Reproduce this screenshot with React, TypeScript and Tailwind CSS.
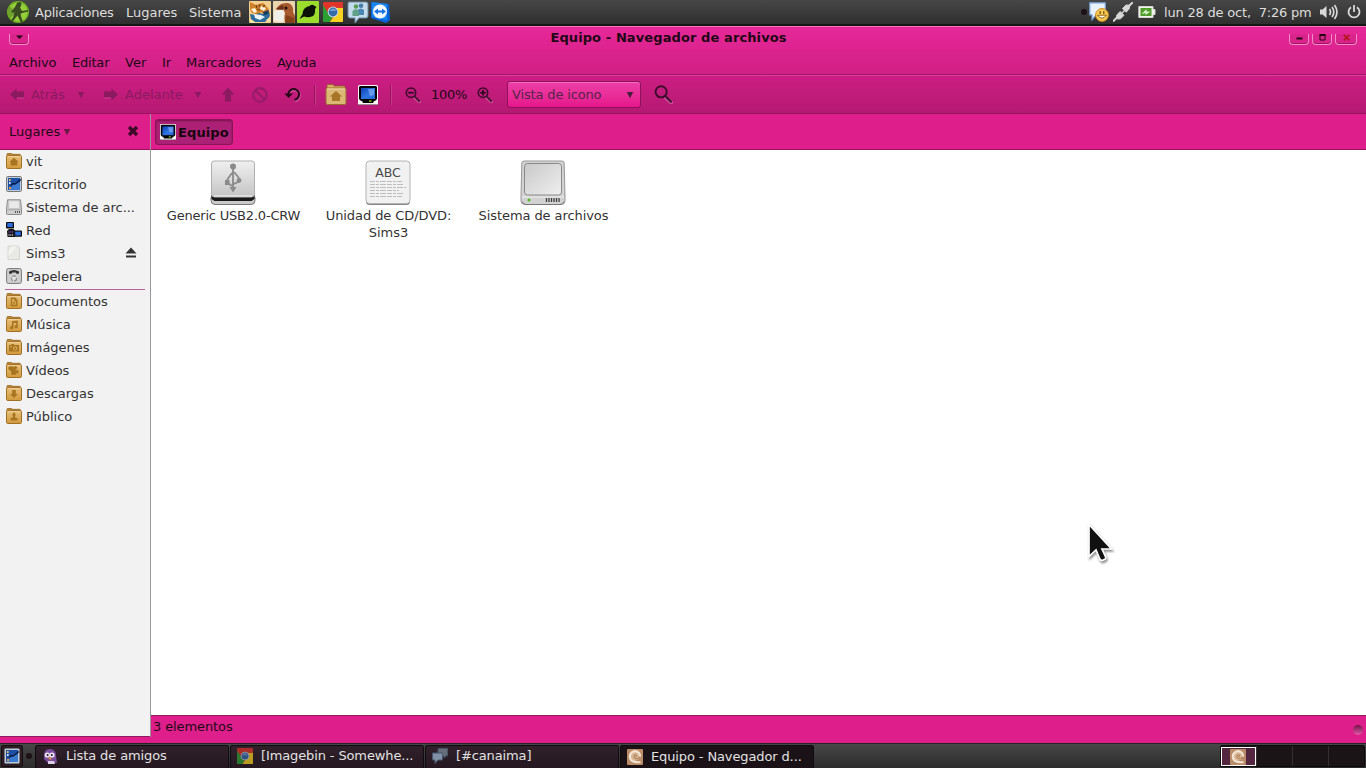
import React from "react";

type IconProps = { size?: number; className?: string };

/* ---------- shared drawings ---------- */

function Monitor({ size = 16, className = "" }: IconProps) {
  return (
    <svg width={size} height={size} viewBox="0 0 20 20" className={`shrink-0 ${className}`}>
      <defs>
        <linearGradient id="screen" x1="0" y1="0" x2="1" y2="1">
          <stop offset="0" stopColor="#0d3fb4" />
          <stop offset="0.55" stopColor="#2f74e4" />
          <stop offset="1" stopColor="#2767d8" />
        </linearGradient>
      </defs>
      <rect x="0" y="0" width="20" height="20" rx="1.5" fill="#f6f6f4" />
      <path d="M2 1h16l1 1v12l-2 2h-1l-1 2H5l-1-2H3l-2-2V2z" fill="#050505" />
      <rect x="3" y="3" width="14" height="11" fill="url(#screen)" />
      <path d="M10 4h6v6l-4 1z" fill="#8fb8f5" opacity="0.6" />
      <rect x="11" y="15.4" width="2.5" height="1.4" fill="#7bd410" />
      <path d="M0 19.5h20" stroke="#9a8f95" />
    </svg>
  );
}

function Desktop({ size = 16, className = "" }: IconProps) {
  return (
    <svg width={size} height={size} viewBox="0 0 16 16" className={`shrink-0 ${className}`}>
      <rect x="0.5" y="0.5" width="15" height="15" rx="1.5" fill="#e8e8e8" stroke="#77797b" />
      <rect x="1.8" y="1.8" width="12.4" height="12.4" fill="#1c4fa5" />
      <path d="M2 14l5-5 7-3v8z" fill="#3a79cf" />
      <path d="M5 9.500l2-2 2 .5L15 3.500" stroke="#0b1b3c" strokeWidth="1.3" fill="none" />
      <rect x="3" y="3" width="1.6" height="2" fill="#f2c35c" />
      <rect x="3" y="6" width="1.6" height="2" fill="#d5e2f6" />
      <rect x="3" y="11" width="2" height="2" fill="#f09a2a" />
    </svg>
  );
}

function Folder({ children }: { children: React.ReactNode }) {
  return (
    <svg width="16" height="16" viewBox="0 0 16 16" className="shrink-0">
      <defs>
        <linearGradient id="folder" x1="0" y1="0" x2="0" y2="1">
          <stop offset="0" stopColor="#e6bf7a" />
          <stop offset="1" stopColor="#d29a3c" />
        </linearGradient>
      </defs>
      <path d="M1 4V1.2Q1 .5 1.8.5h3.4q.8 0 .8.8h7.5q1 0 1 1V4z" fill="#c08a34" stroke="#94631c" strokeWidth="0.8" />
      <rect x="0.5" y="2.6" width="15" height="12.9" rx="1.2" fill="url(#folder)" stroke="#a36f25" />
      <path d="M1.5 3.6h13" stroke="#f2d9a6" strokeWidth="0.8" />
      <g fill="#a8741f" stroke="none">{children}</g>
    </svg>
  );
}

const glyphs = {
  home: <path d="M8 4.8l4.6 4.2h-1.3v3.6H4.7V9H3.4z" />,
  doc: <path fillRule="evenodd" d="M4.8 4.5h4.4l2.3 2.4v6.3H4.8zM6.2 6v5.8h3.9V8.2H8.2V6z M7.2 9h2v1.6h-2z" />,
  music: <path d="M6 5.2l5.8-.6v6.2a1.6 1.6 0 1 1-1.5-1.7V6.8l-2.8.3v4.5A1.7 1.7 0 1 1 6 10z" />,
  camera: <path fillRule="evenodd" d="M3 6h2l.7-.9h2l.7.9H13v6.6H3zM9.2 7.2a2.2 2.2 0 1 0 .01 0zM9.2 8.3a1.1 1.1 0 1 1-.01 0zM4 7.2v1h2v-1z" />,
  video: <path d="M5 4.6a1.8 1.8 0 0 1 2.6 1 1.8 1.8 0 1 1 2 1.9v1.2l2.8-1.3v4.4L10.2 11v1.8H5.4L5 9 3.4 8.2A1.9 1.9 0 0 1 5 4.6z" />,
  down: <path d="M6.2 5h3.6v4h2.1L8 13 4.1 9h2.1z" />,
  share: <path d="M7.1 4.5h1.8v1.2l1 .9-.9 1.6v1.1l2.8 1.3-.6 2H4.8l-.6-2L7 9.3V8.2L6.1 6.6l1-.9z" />,
};

function Drive({ size = 16 }: IconProps) {
  return (
    <svg width={size} height={size} viewBox="0 0 16 16" className="shrink-0">
      <path d="M1.5.8h13l1 9.6v4.400q0 .7-.8.7H1.300q-.8 0-.8-.7v-4.400z" fill="#cfcfcf" stroke="#8b8b8b" />
      <rect x="2.6" y="1.8" width="10.8" height="7.8" rx="0.6" fill="#e9e9e9" stroke="#b4b4b4" strokeWidth="0.6" />
      <path d="M.8 10.8h14.4" stroke="#a5a5a5" />
      <path d="M9.5 12v2M11.5 12v2M13.5 12v2" stroke="#555" />
    </svg>
  );
}

function Network() {
  return (
    <svg width="16" height="16" viewBox="0 0 16 16" className="shrink-0">
      <rect x="0" y="0" width="8" height="6.4" rx="1" fill="#080808" />
      <rect x="1.2" y="1" width="5.6" height="4" fill="#2a6ee0" />
      <rect x="8" y="8.6" width="8" height="6.2" rx="1" fill="#080808" />
      <rect x="9.2" y="9.6" width="5.6" height="3.9" fill="#2a6ee0" />
      <path d="M1 9l2-2h4.500l1.500 1.500V15H1.500z" fill="#17151c" />
      <path d="M2.6 10h4.5" stroke="#9b63e8" strokeDasharray="1 .7" />
      <path d="M2.5 13h5" stroke="#c9c9c9" strokeDasharray="1 .8" strokeWidth="1.6" />
    </svg>
  );
}

function Paper() {
  return (
    <svg width="16" height="16" viewBox="0 0 16 16" className="shrink-0">
      <path d="M2 1h10l1.500 1.500v12H2z" fill="#e9e9e6" stroke="#cfcfca" strokeWidth="0.8" />
      <path d="M2.500 6l4-4.500h4L2.500 11z" fill="#f3f3f1" />
    </svg>
  );
}

function Trash() {
  return (
    <svg width="16" height="16" viewBox="0 0 16 16" className="shrink-0">
      <rect x="0.6" y="0.6" width="14.8" height="14.8" rx="1.8" fill="#cfcfcf" stroke="#777" />
      <path d="M3 3.600q5-3 10 0v2L11 6 9.500 4.600h-3L5 6 3 5.600z" fill="#333" />
      <circle cx="8" cy="10.4" r="2.5" fill="#e3e3e3" stroke="#8c8c8c" strokeWidth="1.2" strokeDasharray="3.6 1.3" />
    </svg>
  );
}

function Chrome({ size = 20, dim = false }: { size?: number; dim?: boolean }) {
  return (
    <svg width={size} height={size} viewBox="0 0 20 20" className={dim ? "shrink-0 opacity-70" : "shrink-0"}>
      <rect width="20" height="20" rx="1.5" fill="#e23327" />
      <path d="M0 3l6 9 4 2-3 6H1q-1 0-1-1z" fill="#2c9f33" />
      <path d="M20 6v13q0 1-1 1H7l4-6 3-4-2-4z" fill="#f6d321" />
      <path d="M0 0h20v6H10z" fill="#e0352b" />
      <circle cx="10" cy="10" r="5.4" fill="#cfd9e2" />
      <circle cx="10" cy="10" r="4.4" fill="#3569a8" />
      <path d="M6.800 9a3.300 3.300 0 0 1 6.400 0" fill="#6fa0d4" />
    </svg>
  );
}

function Arrow({ flip = false }: { flip?: boolean }) {
  return (
    <svg width="16" height="16" viewBox="0 0 16 16" className={flip ? "shrink-0 -scale-x-100" : "shrink-0"}>
      <path d="M1 7.500L7.500 1.500V4.500H15v6H7.500V13.500z" fill="#8b1a60" />
      <path d="M8 11h7" stroke="#d64a9c" strokeWidth="0.7" />
    </svg>
  );
}

function Caret({ className = "" }: { className?: string }) {
  return (
    <svg width="8" height="8" viewBox="0 0 8 8" className={`shrink-0 ${className}`} fill="currentColor">
      <path d="M.8 1h6.400L4 7.200z" />
    </svg>
  );
}

function Magnifier({ size, sign }: { size: number; sign?: "+" | "-" }) {
  return (
    <svg width={size} height={size} viewBox="0 0 16 16" className="shrink-0" fill="none">
      <path d="M10 10.800l4.500 4" stroke="#e88abf" strokeWidth="3" strokeLinecap="round" opacity="0.5" />
      <path d="M9.800 9.600l4.400 4.400" stroke="#4a1237" strokeWidth="2" strokeLinecap="round" />
      <circle cx="6" cy="5.700" r="4.700" stroke="#3b0b2b" strokeWidth="1.600" />
      {sign && <path d="M3.200 5.700h5.600" stroke="#2a0a20" strokeWidth="1.700" />}
      {sign === "+" && <path d="M6 2.900v5.600" stroke="#2a0a20" strokeWidth="1.700" />}
    </svg>
  );
}

function Shell({ size = 16 }: IconProps) {
  return (
    <svg width={size} height={size} viewBox="0 0 16 16" className="shrink-0" fill="none">
      <rect width="16" height="16" rx="1" fill="#b98b66" />
      <circle cx="8" cy="6.800" r="5" fill="#d9b795" />
      <path d="M13.500 13C7 14 3 12 2.800 7.500 3 4 6 2 8.500 2.200c3 .3 5 2.600 4.500 5.600" stroke="#f2e4d2" strokeWidth="2.200" />
      <path d="M12.800 7.500c-.8 2.600-4.600 3-5.600 1S8 5 9.400 6c.8.8 0 2-1 1.800" stroke="#a4744e" strokeWidth="1" />
    </svg>
  );
}

/* ---------- top panel ---------- */

function TopPanel() {
  return (
    <header className="flex h-[26px] items-center border-b-2 border-[#161616] bg-gradient-to-b from-[#474747] to-[#2f2f2f] text-[#dedede]">
      <svg width="24" height="24" viewBox="0 0 24 24" className="ml-[6px] shrink-0">
        <circle cx="12" cy="12" r="11" fill="#6fae22" />
        <circle cx="12" cy="12" r="9.500" fill="#94cf3b" />
        <path d="M3 6l5 4 1 4-5 4q-3-6-1-12z" fill="#5b8528" opacity=".6" />
        <path d="M11 3q3-2 4.500.500L15 6l-1 1.500 2 3.500 6-1v1.500l-6 1.500-1.500 1 1 4 1.500 4-2 .5-3.500-7-2.500 3-3 4-1.500-.5 3-5.500 1-5L7 13l-2-1 4-5z" fill="#394b20" />
      </svg>
      <span className="ml-[5px] w-[91px] tracking-[-0.22px]">Aplicaciones</span>
      <span className="w-[63px]">Lugares</span>
      <span className="w-[60px]">Sistema</span>
      <div className="flex items-center">
        <svg width="22" height="22" viewBox="0 0 22 22" className="mr-[2px]">
          <rect width="22" height="22" rx="1" fill="#f2cf8c" />
          <path d="M1 1l6 3 7-2 5 5 2 6-5 1-4-3-3 3-6-2-2-4z" fill="#cf812a" />
          <path d="M2 8l4-1 2 4-3 1zM12 5l5 2-2 3-4-2z" fill="#fff4d9" />
          <path d="M7 4l1 3M11 3l-1 3M16 4l-2 2M8 8l3 1" stroke="#7a4313" strokeWidth="1.200" />
          <path d="M1 13l5 1 4-2 4 1 6-2 1 4-5 6H6l-4-3z" fill="#2b6b9d" />
          <path d="M5 13l7 1 4 2-5 3-5-2z" fill="#eef3f5" />
          <path d="M14 11l6-2-1 4-4 1z" fill="#183d5c" />
          <path d="M1 18l6 4H1zM17 19l4-2v4z" fill="#fbe6a6" />
        </svg>
        <svg width="22" height="22" viewBox="0 0 22 22" className="mr-[2px]">
          <rect width="22" height="22" rx="1" fill="#ead3ad" />
          <path d="M3 8Q7 1 15 2q6 2 5 9l2 4v7H12L11 12z" fill="#a75a2e" />
          <path d="M1 10l9-2 2 4-2 9-9-1z" fill="#f1eeea" />
          <path d="M3 8l6-4 2 2-1 3z" fill="#6d3318" />
          <circle cx="13" cy="7" r="1.500" fill="#1b0d07" />
          <path d="M13 14l8 3v5h-9z" fill="#824019" />
        </svg>
        <svg width="22" height="22" viewBox="0 0 22 22" className="mr-[4px]">
          <rect width="22" height="22" rx="1" fill="#9bdc2d" />
          <path d="M2.500 18L5.500 13Q6 6 12.500 5q2.500-2 4.500-.5L19.500 6 18 8q1 7-5 8-3 .5-6-.5z" fill="#0c1205" />
        </svg>
        <Chrome size={20} />
        <svg width="22" height="22" viewBox="0 0 22 22" className="ml-[4px]">
          <path d="M2 1h17q2 0 2 2v12q0 2-2 2h-7l-4 5v-5H3q-2 0-2-2V3q0-2 1-2z" fill="#c5dcec" stroke="#6b8ca5" />
          <circle cx="9" cy="5.500" r="2.300" fill="#5b9e56" />
          <circle cx="14" cy="4.800" r="2.300" fill="#467da8" />
          <path d="M10.500 14V9q3-3 6.500 0v5z" fill="#4a86b4" />
          <path d="M5.500 15V10q3-3.500 6.500 0v5z" fill="#62a08a" />
        </svg>
        <svg width="20" height="22" viewBox="0 0 20 22" className="ml-[2px]">
          <path d="M0 1l18 2 1 16-4 3-15-5z" fill="#0763d8" />
          <path d="M1 1l15 2v16l-15-3z" fill="#1b87ee" />
          <circle cx="9" cy="10.500" r="7" fill="#f3f9ff" />
          <path d="M3 10.500l4-3v2h4v-2l4 3-4 3v-2H7v2z" fill="#1473df" />
        </svg>
      </div>
      <div className="flex-1" />
      <span className="mr-[2px] h-[6px] w-[6px] rounded-full bg-[#1d1119]" />
      <svg width="20" height="20" viewBox="0 0 20 20" className="mr-[4px]">
        <path d="M.8.800h15.500v12H7l-4 5v-5H.8z" fill="#e9f1fb" stroke="#77a0d5" strokeWidth="1.200" />
        <circle cx="13" cy="13" r="6.400" fill="#f8cc55" stroke="#d08a18" />
        <path d="M8.500 13.200q4.500 6 9 0z" fill="#fff8e0" stroke="#8a5208" strokeWidth=".9" />
        <path d="M11.200 9.200v2.600M14.800 9.200v2.600" stroke="#694006" strokeWidth="1.300" />
      </svg>
      <svg width="20" height="20" viewBox="0 0 20 20" className="mr-[5px]" stroke="#d6d6d6" fill="#d6d6d6">
        <path d="M0 19.500l5-5M15 5l5-5" strokeWidth="2" />
        <path d="M3.500 13.500l3.500-4 4 3.800-3.500 3.500-3 .2zM9.500 6.500l3.500-3.500 3 .2.500 3-3.200 4z" />
        <path d="M8 12l4-4" strokeWidth="1.500" />
      </svg>
      <svg width="18" height="14" viewBox="0 0 18 14" className="mr-[8px]">
        <path d="M.8 1.500h14.200v3h2v5h-2v3H.8z" fill="#f1f1ec" stroke="#d6d6d2" />
        <rect x="2.500" y="3" width="11" height="8" fill="#4f9c2b" />
        <path d="M3.500 9l5-5v2.500h4L7.500 10V8z" fill="#d8f2c9" />
      </svg>
      <span className="w-[156px] whitespace-pre tracking-[-0.2px]">lun 28 de oct,&nbsp; 7:26 pm</span>
      <svg width="19" height="18" viewBox="0 0 19 18" className="mr-[8px]" fill="none" stroke="#d8d8d8">
        <path d="M0 6.500h2.500l4-3.500v12l-4-3.500H0z" fill="#d8d8d8" stroke="none" />
        <path d="M9.500 6q2 3 0 6M12 4q3.600 5 0 10M14.500 2q5 7 0 14" strokeWidth="1.700" />
      </svg>
      <svg width="14" height="14" viewBox="0 0 14 14" className="mr-[5px]" fill="none" stroke="#d8d8d8" strokeWidth="1.800">
        <path d="M4 2.300a5.500 5.500 0 1 0 6 0M7 0v7" />
      </svg>
    </header>
  );
}

/* ---------- window chrome ---------- */

function WindowButton({ children, className }: { children: React.ReactNode; className: string }) {
  return (
    <span
      className={`flex h-[11px] items-center justify-center rounded-b-[4px] border border-t-0 border-[#f08cc6] bg-[#d9248c] shadow-[inset_0_-1px_0_#a81168] ${className}`}
    >
      <svg width="9" height="9" viewBox="0 0 9 9" className="-mt-[4px]">
        {children}
      </svg>
    </span>
  );
}

function TitleBar() {
  return (
    <div className="flex h-[24px] border-t border-[#f574bd] pt-[7px]">
      <WindowButton className="ml-[9px] w-[20px]">
        <path d="M1 2.500h7L4.500 6z" fill="#250616" />
      </WindowButton>
      <h1 className="-mt-[5px] flex-1 pl-[19px] text-center text-[13px] leading-[18px] font-bold tracking-[0.1px] text-[#1e0815]">
        Equipo - Navegador de archivos
      </h1>
      <WindowButton className="mr-[3px] w-[20px]">
        <path d="M1.500 5.500h6" stroke="#200511" strokeWidth="2" />
      </WindowButton>
      <WindowButton className="mr-[3px] w-[20px]">
        <path d="M2 2h5v5H2z" stroke="#200511" fill="none" />
        <path d="M1.500 2h6" stroke="#200511" strokeWidth="2" />
      </WindowButton>
      <WindowButton className="mr-[9px] w-[22px]">
        <path d="M1.800 1.800l5.500 5.500M7.300 1.800L1.800 7.300" stroke="#b5161d" strokeWidth="1.800" />
      </WindowButton>
    </div>
  );
}

function MenuBar() {
  return (
    <nav className="flex h-[25px] items-center border-b border-[#a1186a] pl-[9px] text-[#1b0914]">
      <span className="w-[63px] tracking-[-0.2px]">Archivo</span>
      <span className="w-[53px] tracking-[-0.2px]">Editar</span>
      <span className="w-[37px]">Ver</span>
      <span className="w-[24px]">Ir</span>
      <span className="w-[91px]">Marcadores</span>
      <span className="tracking-[-0.2px]">Ayuda</span>
    </nav>
  );
}

function Separator({ className }: { className: string }) {
  return <span className={`h-[20px] w-[2px] border-l border-[#98155e] bg-[#d9529f]/50 ${className}`} />;
}

function ToolBar() {
  return (
    <div className="flex h-[39px] items-center border-t border-b border-t-[#e03d9c] border-b-[#9a115f] bg-gradient-to-b from-[#cd1e83] to-[#b51972] text-[#8b1a60]">
      <span className="ml-[9px] flex"><Arrow /></span>
      <span className="ml-[6px] w-[46px]">Atrás</span>
      <Caret />
      <span className="ml-[18px] flex"><Arrow flip /></span>
      <span className="ml-[6px] w-[69px]">Adelante</span>
      <Caret />
      <svg width="16" height="16" viewBox="0 0 16 16" className="ml-[18px]">
        <path d="M8 .8l6.500 6.700H11V14.500H5V7.500H1.500z" fill="#8b1a60" />
      </svg>
      <svg width="16" height="16" viewBox="0 0 16 16" className="ml-[16px]" fill="none" stroke="#9b1c6b" strokeWidth="2.400">
        <circle cx="8" cy="8" r="6.700" />
        <path d="M3.500 3.500l9 9" />
      </svg>
      <svg width="18" height="18" viewBox="0 0 18 18" className="ml-[16px]" fill="none">
        <path d="M4.500 10.500A5.600 5.600 0 1 1 11 15" stroke="#df6dae" strokeWidth="3" opacity=".5" />
        <path d="M4.300 9A5.400 5.400 0 1 1 10.500 13.800" stroke="#260718" strokeWidth="2" />
        <path d="M.3 7.500l4.200 4.500L9 7.500z" fill="#260718" />
      </svg>
      <Separator className="ml-[12px]" />
      <svg width="22" height="21" viewBox="0 0 22 21" className="ml-[9px]">
        <path d="M2 5V1.500Q2 .5 3 .5h5q1 0 1 1.500h10q1 0 1 1v3z" fill="#d9ad62" stroke="#8e612a" strokeWidth=".8" />
        <rect x="1" y="4" width="20" height="16.500" rx="1.500" fill="#dcb674" stroke="#9d6c2c" />
        <path d="M2 5h18" stroke="#f2ddb0" />
        <path d="M11 7l6 5.500h-2V17H7v-4.500H5z" fill="#a87425" />
      </svg>
      <Monitor size={20} className="ml-[11px]" />
      <Separator className="ml-[12px]" />
      <span className="ml-[13px] flex"><Magnifier size={16} sign="-" /></span>
      <span className="ml-[10px] w-[46px] tracking-[-0.3px] text-[#1b0914]">100%</span>
      <Magnifier size={16} sign="+" />
      <button className="ml-[14px] flex h-[27px] w-[134px] items-center rounded-[3px] border border-[#8d125a] bg-gradient-to-b from-[#ed3ea7] to-[#e5158b] pr-[6px] pl-[4px] text-[#54254a] shadow-[inset_0_1px_0_#f56abf]">
        <span className="tracking-[-0.15px]">Vista de icono</span>
        <Caret className="ml-auto text-[#43203a]" />
      </button>
      <span className="ml-[13px] flex"><Magnifier size={19} /></span>
    </div>
  );
}

/* ---------- sidebar ---------- */

const places = [
  { label: "vit", icon: <Folder>{glyphs.home}</Folder> },
  { label: "Escritorio", icon: <Desktop /> },
  { label: "Sistema de arc...", icon: <Drive /> },
  { label: "Red", icon: <Network /> },
  { label: "Sims3", icon: <Paper />, eject: true },
  { label: "Papelera", icon: <Trash /> },
];

const bookmarks = [
  { label: "Documentos", icon: <Folder>{glyphs.doc}</Folder> },
  { label: "Música", icon: <Folder>{glyphs.music}</Folder> },
  { label: "Imágenes", icon: <Folder>{glyphs.camera}</Folder> },
  { label: "Vídeos", icon: <Folder>{glyphs.video}</Folder> },
  { label: "Descargas", icon: <Folder>{glyphs.down}</Folder> },
  { label: "Público", icon: <Folder>{glyphs.share}</Folder> },
];

function Place({ label, icon, eject }: { label: string; icon: React.ReactNode; eject?: boolean }) {
  return (
    <li className="flex h-[23px] items-center pl-[6px]">
      <span className="mb-px flex">{icon}</span>
      <span className="ml-[4px] whitespace-nowrap">{label}</span>
      {eject && (
        <svg width="12" height="12" viewBox="0 0 12 12" className="mr-[13px] mb-px ml-auto" fill="#333">
          <path d="M6 .5L11.500 6.500H.5zM1 8.500h10v2H1z" />
        </svg>
      )}
    </li>
  );
}

function SideBar() {
  return (
    <aside className="flex w-[151px] shrink-0 flex-col border-r border-[#999]">
      <div className="flex h-[36px] items-center border-b border-[#9a115f] pl-[9px] text-[#1b0914]">
        Lugares
        <Caret className="ml-[3px] text-[#6b1748]" />
        <svg width="12" height="12" viewBox="0 0 12 12" className="mr-[11px] mb-px ml-auto">
          <path d="M2 2l8 8M10 2l-8 8" stroke="#3a0a28" strokeWidth="3.200" />
        </svg>
      </div>
      <div className="flex-1 border-b border-[#8f1a5f] bg-[#f2f2f2] tracking-[-0.03px] text-[#333]">
        <ul>{places.map((p) => <Place key={p.label} {...p} />)}</ul>
        <hr className="mx-[5px] mt-px border-[#b8649a]" />
        <ul>{bookmarks.map((p) => <Place key={p.label} {...p} />)}</ul>
      </div>
    </aside>
  );
}

/* ---------- icon view ---------- */

function UsbDrive() {
  return (
    <svg width="46" height="46" viewBox="0 0 46 46">
      <defs>
        <linearGradient id="metal" x1="0" y1="0" x2="0" y2="1">
          <stop offset="0" stopColor="#f0f0f0" />
          <stop offset="1" stopColor="#c4c4c4" />
        </linearGradient>
      </defs>
      <rect x="1" y="34" width="44" height="10.500" rx="4" fill="#c9c9c9" stroke="#777" />
      <path d="M1.500 35h43v4l-3 2h-37l-3-2z" fill="#191919" />
      <path d="M4 1h38q2.500 0 2.500 3v30q0 3-3 3h-37q-3 0-3-3V4q0-3 2.500-3z" fill="url(#metal)" stroke="#b0b0b0" />
      <path d="M4 36h38" stroke="#f7f7f7" />
      <g stroke="#8a8a8a" strokeWidth="1.800" fill="none">
        <path d="M23 7v21M23 26q-6-2-6-5.500M23 24q6-1 6-5v-1M17 20l5-7M29 18l-5-6" />
      </g>
      <g fill="#8a8a8a">
        <circle cx="23" cy="6.500" r="3" />
        <path d="M19.500 27h7L23 32.500z" />
        <rect x="15" y="20" width="4.500" height="5" />
        <circle cx="29" cy="20.500" r="2.400" />
      </g>
    </svg>
  );
}

function TextFile() {
  return (
    <svg width="46" height="46" viewBox="0 0 46 46">
      <rect x="1" y="1.500" width="44" height="43.500" rx="3.500" fill="#858585" />
      <rect x="1" y="1" width="44" height="42.500" rx="3.500" fill="#f1f1f1" stroke="#b4b4b4" />
      <text x="23" y="16.500" textAnchor="middle" fontSize="12.500" fill="#4a4a4a">ABC</text>
      <g stroke="#bdbdbd" strokeWidth="1" strokeDasharray="5 1 3 1 6 1">
        <path d="M5 21.500h32M5 24.500h33M5 27.500h36M5 30.500h29M5 33.500h34M5 36.500h32" />
      </g>
    </svg>
  );
}

function HardDisk() {
  return (
    <svg width="46" height="46" viewBox="0 0 46 46">
      <defs>
        <linearGradient id="disk" x1="0" y1="0" x2="1" y2="1">
          <stop offset="0" stopColor="#c9c9c9" />
          <stop offset="1" stopColor="#efefef" />
        </linearGradient>
      </defs>
      <path d="M4 1h38q2 0 2.200 2L45 36v5q0 3.500-4 3.500H5q-4 0-4-3.500v-5L1.800 3Q2 1 4 1z" fill="#d2d2d2" stroke="#999" />
      <path d="M2 41.500q1 3 4 3h34q3 0 4-3" fill="none" stroke="#777" />
      <rect x="4.500" y="3.500" width="37" height="31.500" rx="3" fill="url(#disk)" stroke="#8a8a8a" />
      <path d="M2 37h42" stroke="#eee" />
      <circle cx="9" cy="40" r="1.600" fill="#57b92f" />
      <path d="M26.500 38v4M29 38v4M31.500 38v4M34 38v4M36.500 38v4M39 38v4" stroke="#3d3d3d" strokeWidth="1.300" />
    </svg>
  );
}

function Item({ icon, children }: { icon: React.ReactNode; children: React.ReactNode }) {
  return (
    <div className="flex w-[155px] flex-col items-center text-center leading-[17px]">
      {icon}
      <span className="mt-px pl-[2px]">{children}</span>
    </div>
  );
}

function FileArea() {
  return (
    <main className="flex flex-1 flex-col">
      <div className="flex h-[36px] items-center border-b border-[#9a115f] pl-[4px]">
        <span className="flex h-[26px] w-[78px] items-center rounded-[3px] border border-[#8c1459] bg-[#ac2175] pl-[4px] font-bold text-[#180610] shadow-[inset_0_1px_2px_#7c104d]">
          <Monitor size={16} />
          <span className="mt-px ml-[2px] tracking-[0.1px]">Equipo</span>
        </span>
      </div>
      <div className="flex flex-1 bg-white pt-[10px] pl-[4px] text-[#333]">
        <Item icon={<UsbDrive />}><span className="tracking-[-0.2px]">Generic USB2.0-CRW</span></Item>
        <Item icon={<TextFile />}><span className="tracking-[-0.08px]">Unidad de CD/DVD:</span><br />Sims3</Item>
        <Item icon={<HardDisk />}><span className="tracking-[-0.08px]">Sistema de archivos</span></Item>
      </div>
      <div className="flex h-[22px] items-center border-t border-[#8f1a5f] pl-[2px] tracking-[-0.1px] text-[#1b0914]">
        3 elementos
        <span className="mt-[6px] mr-[3px] ml-auto h-[10px] w-[10px] rounded-full bg-gradient-to-b from-[#74124a] to-[#e759aa]" />
      </div>
    </main>
  );
}

/* ---------- taskbar ---------- */

function Task({ icon, label, active = false }: { icon: React.ReactNode; label: string; active?: boolean }) {
  return (
    <div
      className={`mr-[1px] flex h-[24px] w-[194px] shrink-0 items-center rounded-[2px] border border-[#100b0e] pl-[6px] ${
        active ? "bg-[#1b1218] pb-px" : "bg-gradient-to-b from-[#30202a] to-[#251820] pb-[3px]"
      }`}
    >
      {icon}
      <span className="ml-[8px] whitespace-nowrap tracking-[-0.12px]">{label}</span>
    </div>
  );
}

function Pidgin() {
  return (
    <svg width="16" height="16" viewBox="0 0 16 16" className="shrink-0">
      <path d="M2 6Q3 1 8 1q6 0 6 7l1 7H6l-4-4z" fill="#7b4e9c" />
      <circle cx="5.300" cy="7" r="2.600" fill="#eee6f4" />
      <circle cx="10" cy="7" r="2.600" fill="#eee6f4" />
      <circle cx="5.600" cy="7" r="1" fill="#251530" />
      <circle cx="9.800" cy="7" r="1" fill="#251530" />
      <path d="M6 9.500h4L8 12z" fill="#e69b32" />
      <path d="M6 13h6l1 3H6z" fill="#ddd0e5" />
    </svg>
  );
}

function Chat() {
  return (
    <svg width="16" height="16" viewBox="0 0 16 16" className="shrink-0" stroke="#45566d">
      <path d="M6 .5h9.500v7.300H13V10l-2-2H6z" fill="#686e78" />
      <path d="M.5 5h10v7H6l-3 3.500V12H.5z" fill="#8190a3" />
    </svg>
  );
}

function TaskBar() {
  return (
    <footer className="flex h-[25px] items-start border-t border-[#242424] bg-gradient-to-b from-[#474747] to-[#2c2c2c] pt-px text-[#e2e2e2]">
      <span className="ml-px flex h-[22px] w-[22px] items-center justify-center rounded-[2px] border border-[#150e12] bg-[#2b1c25]">
        <Desktop />
      </span>
      <span className="mt-[8px] mr-[3px] ml-[3px] h-[6px] w-[6px] rounded-full bg-[#1b1117]" />
      <Task icon={<Pidgin />} label="Lista de amigos" />
      <Task icon={<Chrome size={16} dim />} label="[Imagebin - Somewhe..." />
      <Task icon={<Chat />} label="[#canaima]" />
      <Task icon={<Shell />} label="Equipo - Navegador d..." active />
      <div className="mr-[1px] ml-auto flex h-[22px] w-[145px] rounded-[2px] border border-[#0d0a0b] bg-[#1a1416]">
        <span className="mt-px flex h-[19px] w-[35px] items-center justify-center border border-white bg-[#552640] pr-px">
          <Shell />
        </span>
        <span className="w-px bg-[#343031]" />
        <span className="w-[36px] border-r border-[#343031]" />
        <span className="w-[36px] border-r border-[#343031]" />
      </div>
    </footer>
  );
}

function Pointer() {
  return (
    <svg width="30" height="44" viewBox="0 0 30 44" className="absolute top-[522px] left-[1086px] drop-shadow-[1px_2px_1px_rgba(0,0,0,0.45)]">
      <path d="M3 2.500v32l7-6.500 3.800 9q1 2 3 1.300l2-1q1.500-.8.800-2.500L16 27h9.500z" fill="#111" stroke="#fff" strokeWidth="1.700" />
    </svg>
  );
}

function App() {
  return (
    <div className="relative flex h-[768px] w-[1366px] flex-col overflow-hidden bg-[#de1f8b] font-['DejaVu_Sans',sans-serif] text-[13px] leading-[17px]">
      <TopPanel />
      <div className="bg-gradient-to-b from-[#e82899] to-[#cf1f84]">
        <TitleBar />
        <MenuBar />
      </div>
      <ToolBar />
      <div className="flex h-[623px] flex-none">
        <SideBar />
        <FileArea />
      </div>
      <div className="h-[6px]" />
      <TaskBar />
      <Pointer />
    </div>
  );
}

export default App;
